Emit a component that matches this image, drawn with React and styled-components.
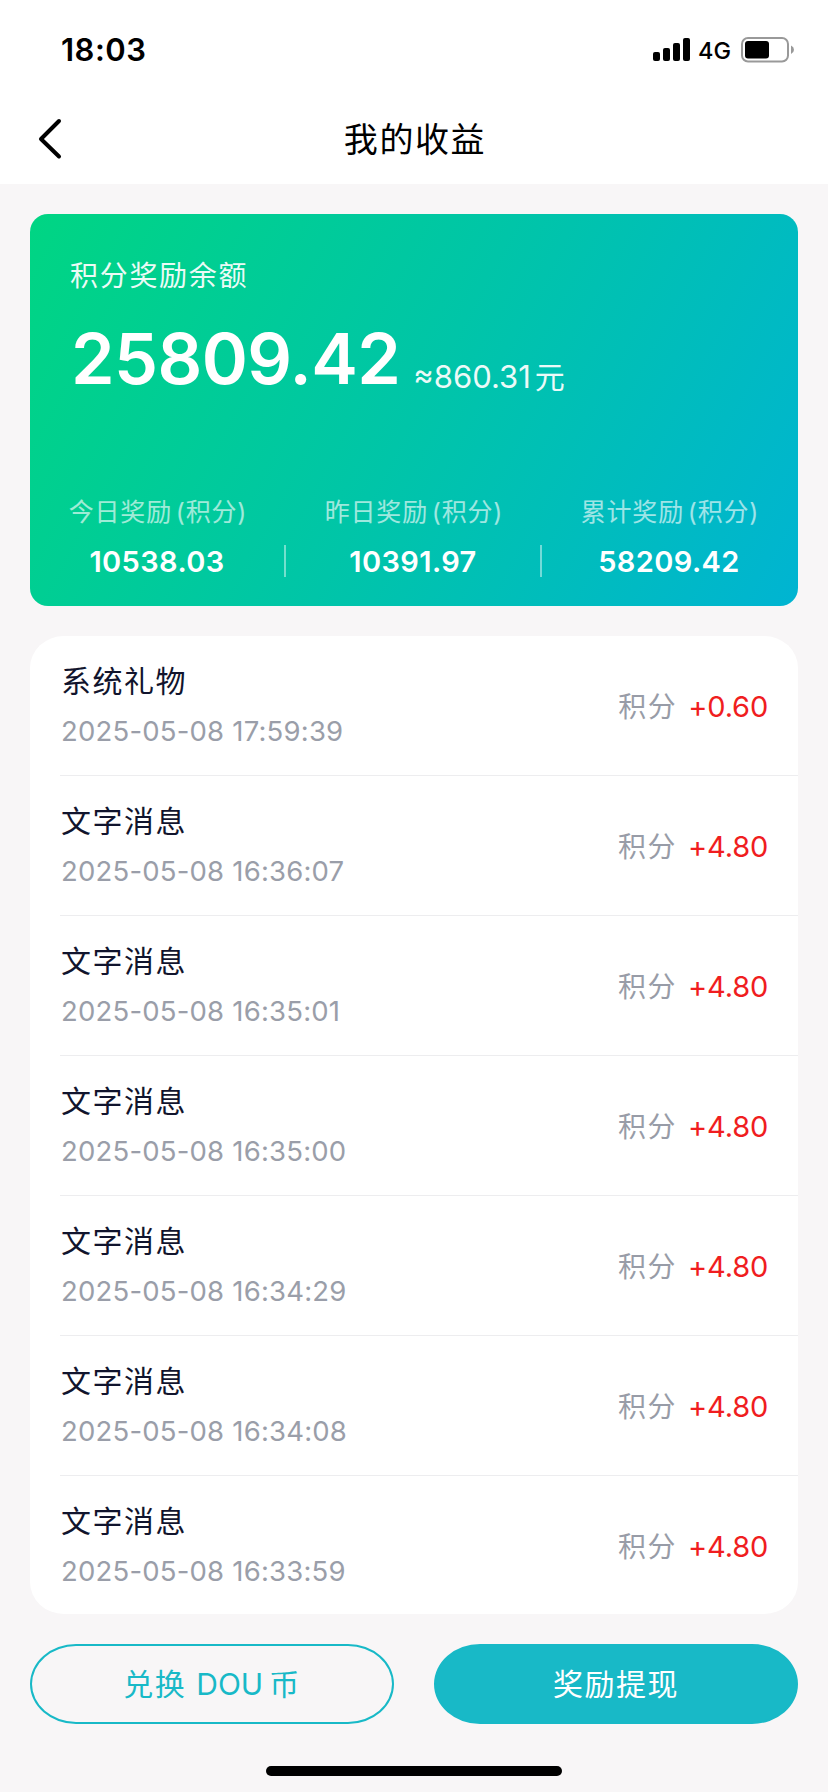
import React from 'react';
import styled, { createGlobalStyle } from 'styled-components';

const GlobalStyle = createGlobalStyle`
  * {
    box-sizing: border-box;
  }

  body {
    margin: 0;
    background: #f8f6f7;
    font-family: Inter, 'Noto Sans CJK SC', sans-serif;
  }

  button {
    padding: 0;
    border: 0;
    background: none;
    font-family: inherit;
  }
`;

const Page = styled.div`
  display: flex;
  flex-direction: column;
  width: 828px;
  height: 1792px;
  overflow: hidden;
`;

const StatusBar = styled.div`
  display: flex;
  justify-content: space-between;
  align-items: center;
  height: 100px;
  padding: 0 34px 0 61px;
  background: #fff;
`;

const Clock = styled.div`
  font-size: 31px;
  font-weight: 600;
  line-height: 40px;
  letter-spacing: 0.5px;
`;

const StatusIcons = styled.div`
  display: flex;
  align-items: center;
`;

const Network = styled.span`
  margin: 1px 10px 0 8px;
  font-size: 23.5px;
  font-weight: 500;
  line-height: 28px;
`;

const NavBar = styled.div`
  display: grid;
  grid-template-columns: 100px 1fr 100px;
  align-items: center;
  height: 84px;
  padding-bottom: 6px;
  background: #fff;
`;

const BackButton = styled.button`
  display: flex;
  padding-left: 36px;
`;

const Title = styled.h1`
  margin: 0;
  padding: 2px 0 0 2px;
  font-size: 34px;
  font-weight: 400;
  line-height: 40px;
  letter-spacing: 1.6px;
  text-align: center;
`;

const Content = styled.div`
  display: flex;
  flex-direction: column;
  gap: 30px;
  padding: 30px;
`;

const BalanceCard = styled.div`
  height: 392px;
  padding-top: 42px;
  border-radius: 18px;
  background: linear-gradient(118deg, #00d583 0%, #00c5a8 50%, #00b4d2 100%);
  color: #fff;
`;

const BalanceLabel = styled.div`
  padding-left: 40px;
  font-size: 28px;
  line-height: 40px;
  letter-spacing: 1.7px;
  opacity: 0.92;
`;

const BalanceRow = styled.div`
  display: flex;
  align-items: flex-end;
  height: 90px;
  margin-top: 18px;
  padding-left: 41px;
`;

const Balance = styled.span`
  font-size: 70px;
  font-weight: 600;
  line-height: 90px;
  letter-spacing: -0.6px;
`;

const Approx = styled.span`
  margin: 0 0 7px 13px;
  font-size: 31px;
  line-height: 40px;
  opacity: 0.92;
`;

const Unit = styled.span`
  margin-left: 4px;
  font-size: 30px;
`;

const Stats = styled.div`
  display: flex;
  margin-top: 88px;
`;

const Stat = styled.div`
  display: flex;
  flex: 1;
  flex-direction: column;
  align-items: center;
`;

const StatLabel = styled.div`
  font-size: 25px;
  line-height: 40px;
  letter-spacing: 0.8px;
  word-spacing: -4px;
  opacity: 0.62;
`;

const StatValue = styled.div`
  width: 100%;
  height: 32px;
  margin-top: 13px;
  border-right: 2px solid ${({ $last }) => ($last ? 'transparent' : 'rgba(255, 255, 255, 0.45)')};
  font-size: 29px;
  font-weight: 600;
  line-height: 34px;
  letter-spacing: 0.4px;
  text-align: center;
`;

const List = styled.div`
  height: 978px;
  padding-left: 30px;
  border-radius: 34px / 32px;
  background: #fff;
`;

const Row = styled.div`
  display: flex;
  justify-content: space-between;
  height: 140px;
  padding-right: 30px;
  border-bottom: 1px solid #ededef;

  &:last-child {
    border-bottom: 0;
  }
`;

const RowTitle = styled.div`
  padding: 25px 0 0 1px;
  color: #11142d;
  font-size: 30px;
  line-height: 40px;
  letter-spacing: 1.5px;
`;

const RowTime = styled.div`
  margin-top: 10px;
  padding-left: 1px;
  color: #9a9ea9;
  font-size: 27.5px;
  line-height: 40px;
  letter-spacing: 0.2px;
`;

const Points = styled.div`
  display: flex;
  align-items: baseline;
  padding-top: 51px;
  color: #989ca7;
  font-size: 28px;
  line-height: 40px;
  letter-spacing: 1.6px;
`;

const Amount = styled.span`
  margin-left: 11px;
  color: #f01d20;
  font-size: 29px;
  letter-spacing: -0.2px;
`;

const Actions = styled.div`
  display: grid;
  grid-template-columns: 1fr 1fr;
  gap: 40px;
`;

const ActionButton = styled.button`
  height: 80px;
  border: 2px solid #18b9c7;
  border-radius: 46px / 40px;
  background: ${({ $primary }) => ($primary ? '#18b9c7' : 'transparent')};
  color: ${({ $primary }) => ($primary ? '#fff' : '#18b9c7')};
  font-size: 30px;
  line-height: 40px;
  letter-spacing: 1.5px;
`;

const Latin = styled.span`
  margin-right: 6px;
  letter-spacing: 0;
`;

const HomeIndicator = styled.div`
  width: 296px;
  height: 10px;
  margin: 12px auto 0;
  border-radius: 5px;
  background: #000;
`;

const SignalIcon = () => (
  <svg width="37" height="24" viewBox="0 0 37 24">
    <rect x="0" y="14" width="7" height="9" rx="2" />
    <rect x="10" y="10" width="7" height="13" rx="2" />
    <rect x="20" y="5" width="7" height="18" rx="2" />
    <rect x="30" y="0" width="7" height="23" rx="2" />
  </svg>
);

const BatteryIcon = () => (
  <svg width="53" height="26" viewBox="0 0 53 26">
    <rect x="1" y="1" width="46" height="23.5" rx="6" fill="none" stroke="#999" strokeWidth="2" />
    <rect x="4" y="4" width="24" height="17.5" rx="3" />
    <path d="M50 8.5 Q53 10 53 12.7 Q53 15.5 50 17 Z" fill="#999" />
  </svg>
);

const BackIcon = () => (
  <svg width="28" height="42" viewBox="0 0 28 42" fill="none" stroke="#000" strokeWidth="4" strokeLinecap="round" strokeLinejoin="round">
    <path d="M23 3 L5 21 L23 38.5" />
  </svg>
);

const stats = [
  { label: '今日奖励 (积分)', value: '10538.03' },
  { label: '昨日奖励 (积分)', value: '10391.97' },
  { label: '累计奖励 (积分)', value: '58209.42' },
];

const records = [
  { title: '系统礼物', time: '2025-05-08 17:59:39', amount: '+0.60' },
  { title: '文字消息', time: '2025-05-08 16:36:07', amount: '+4.80' },
  { title: '文字消息', time: '2025-05-08 16:35:01', amount: '+4.80' },
  { title: '文字消息', time: '2025-05-08 16:35:00', amount: '+4.80' },
  { title: '文字消息', time: '2025-05-08 16:34:29', amount: '+4.80' },
  { title: '文字消息', time: '2025-05-08 16:34:08', amount: '+4.80' },
  { title: '文字消息', time: '2025-05-08 16:33:59', amount: '+4.80' },
];

const Record = ({ title, time, amount }) => (
  <Row>
    <div>
      <RowTitle>{title}</RowTitle>
      <RowTime>{time}</RowTime>
    </div>
    <Points>
      积分
      <Amount>{amount}</Amount>
    </Points>
  </Row>
);

const App = () => (
  <Page>
    <GlobalStyle />
    <StatusBar>
      <Clock>18:03</Clock>
      <StatusIcons>
        <SignalIcon />
        <Network>4G</Network>
        <BatteryIcon />
      </StatusIcons>
    </StatusBar>
    <NavBar>
      <BackButton>
        <BackIcon />
      </BackButton>
      <Title>我的收益</Title>
    </NavBar>
    <Content>
      <BalanceCard>
        <BalanceLabel>积分奖励余额</BalanceLabel>
        <BalanceRow>
          <Balance>25809.42</Balance>
          <Approx>
            ≈860.31<Unit>元</Unit>
          </Approx>
        </BalanceRow>
        <Stats>
          {stats.map(({ label, value }, i) => (
            <Stat key={label}>
              <StatLabel>{label}</StatLabel>
              <StatValue $last={i === stats.length - 1}>{value}</StatValue>
            </Stat>
          ))}
        </Stats>
      </BalanceCard>
      <List>
        {records.map(record => (
          <Record key={record.time} {...record} />
        ))}
      </List>
      <Actions>
        <ActionButton>
          兑换 <Latin>DOU</Latin>币
        </ActionButton>
        <ActionButton $primary>奖励提现</ActionButton>
      </Actions>
    </Content>
    <HomeIndicator />
  </Page>
);

export default App;
